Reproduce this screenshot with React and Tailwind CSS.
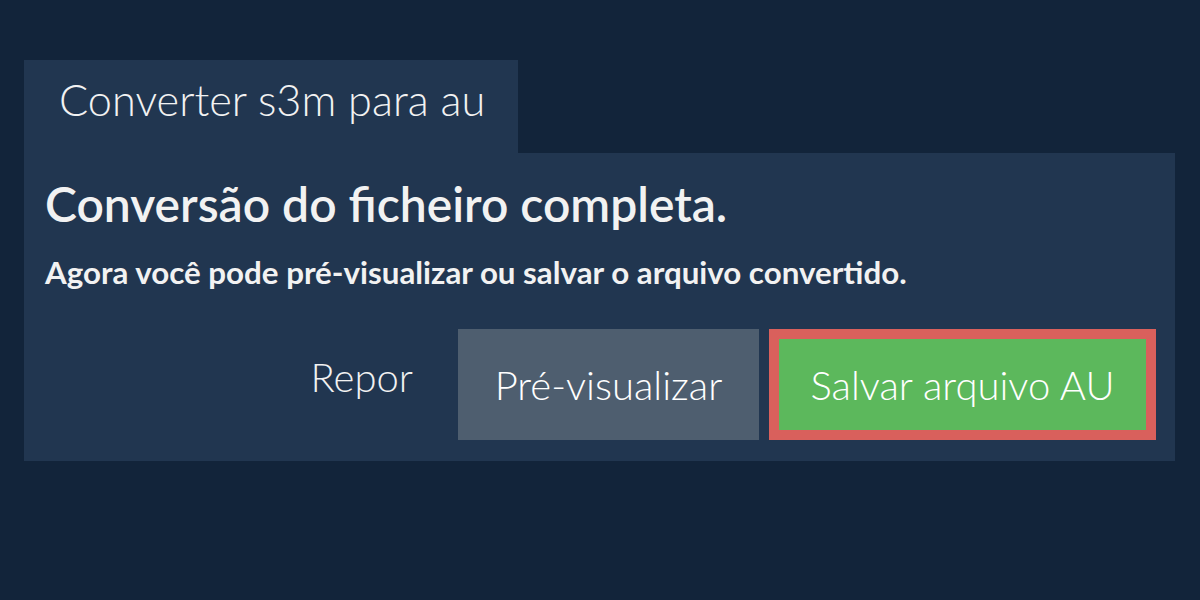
import React from 'react';

const App = () => {
  return (
    <div className="w-[1200px] h-[600px] bg-[#12243a] pt-[60px] px-[24px] font-['Lato',sans-serif] text-[#f2f2f2]">
      <div className="flex">
        <div className="bg-[#213650] h-[93px] w-[494px] pl-[35px] pt-[14px]">
          <span className="text-[43.3px] font-light leading-[1.2]">Converter s3m para au</span>
        </div>
      </div>
      <div className="bg-[#213650] w-[1151px] h-[308px] pt-[22px] pl-[21px] pr-[19px]">
        <h1 className="text-[48px] font-semibold leading-[58px]">Conversão do ficheiro completa.</h1>
        <p className="text-[31.3px] font-bold mt-[21px] leading-[37px]">
          Agora você pode pré-visualizar ou salvar o arquivo convertido.
        </p>
        <div className="flex justify-end items-center mt-[38px] gap-[10px]">
          <button className="text-[40px] font-light leading-[48px] pr-[35px] h-[111px] pb-[15px] text-[#f2f2f2]">Repor</button>
          <button className="bg-[#4e5e6f] text-[40px] font-light leading-[48px] w-[301px] h-[111px] text-white">Pré-visualizar</button>
          <button className="bg-[#5cb85c] border-[10px] border-[#d9605c] text-[40px] font-light leading-[48px] w-[387px] h-[111px] text-white">
            Salvar arquivo AU
          </button>
        </div>
      </div>
    </div>
  );
};

export default App;
